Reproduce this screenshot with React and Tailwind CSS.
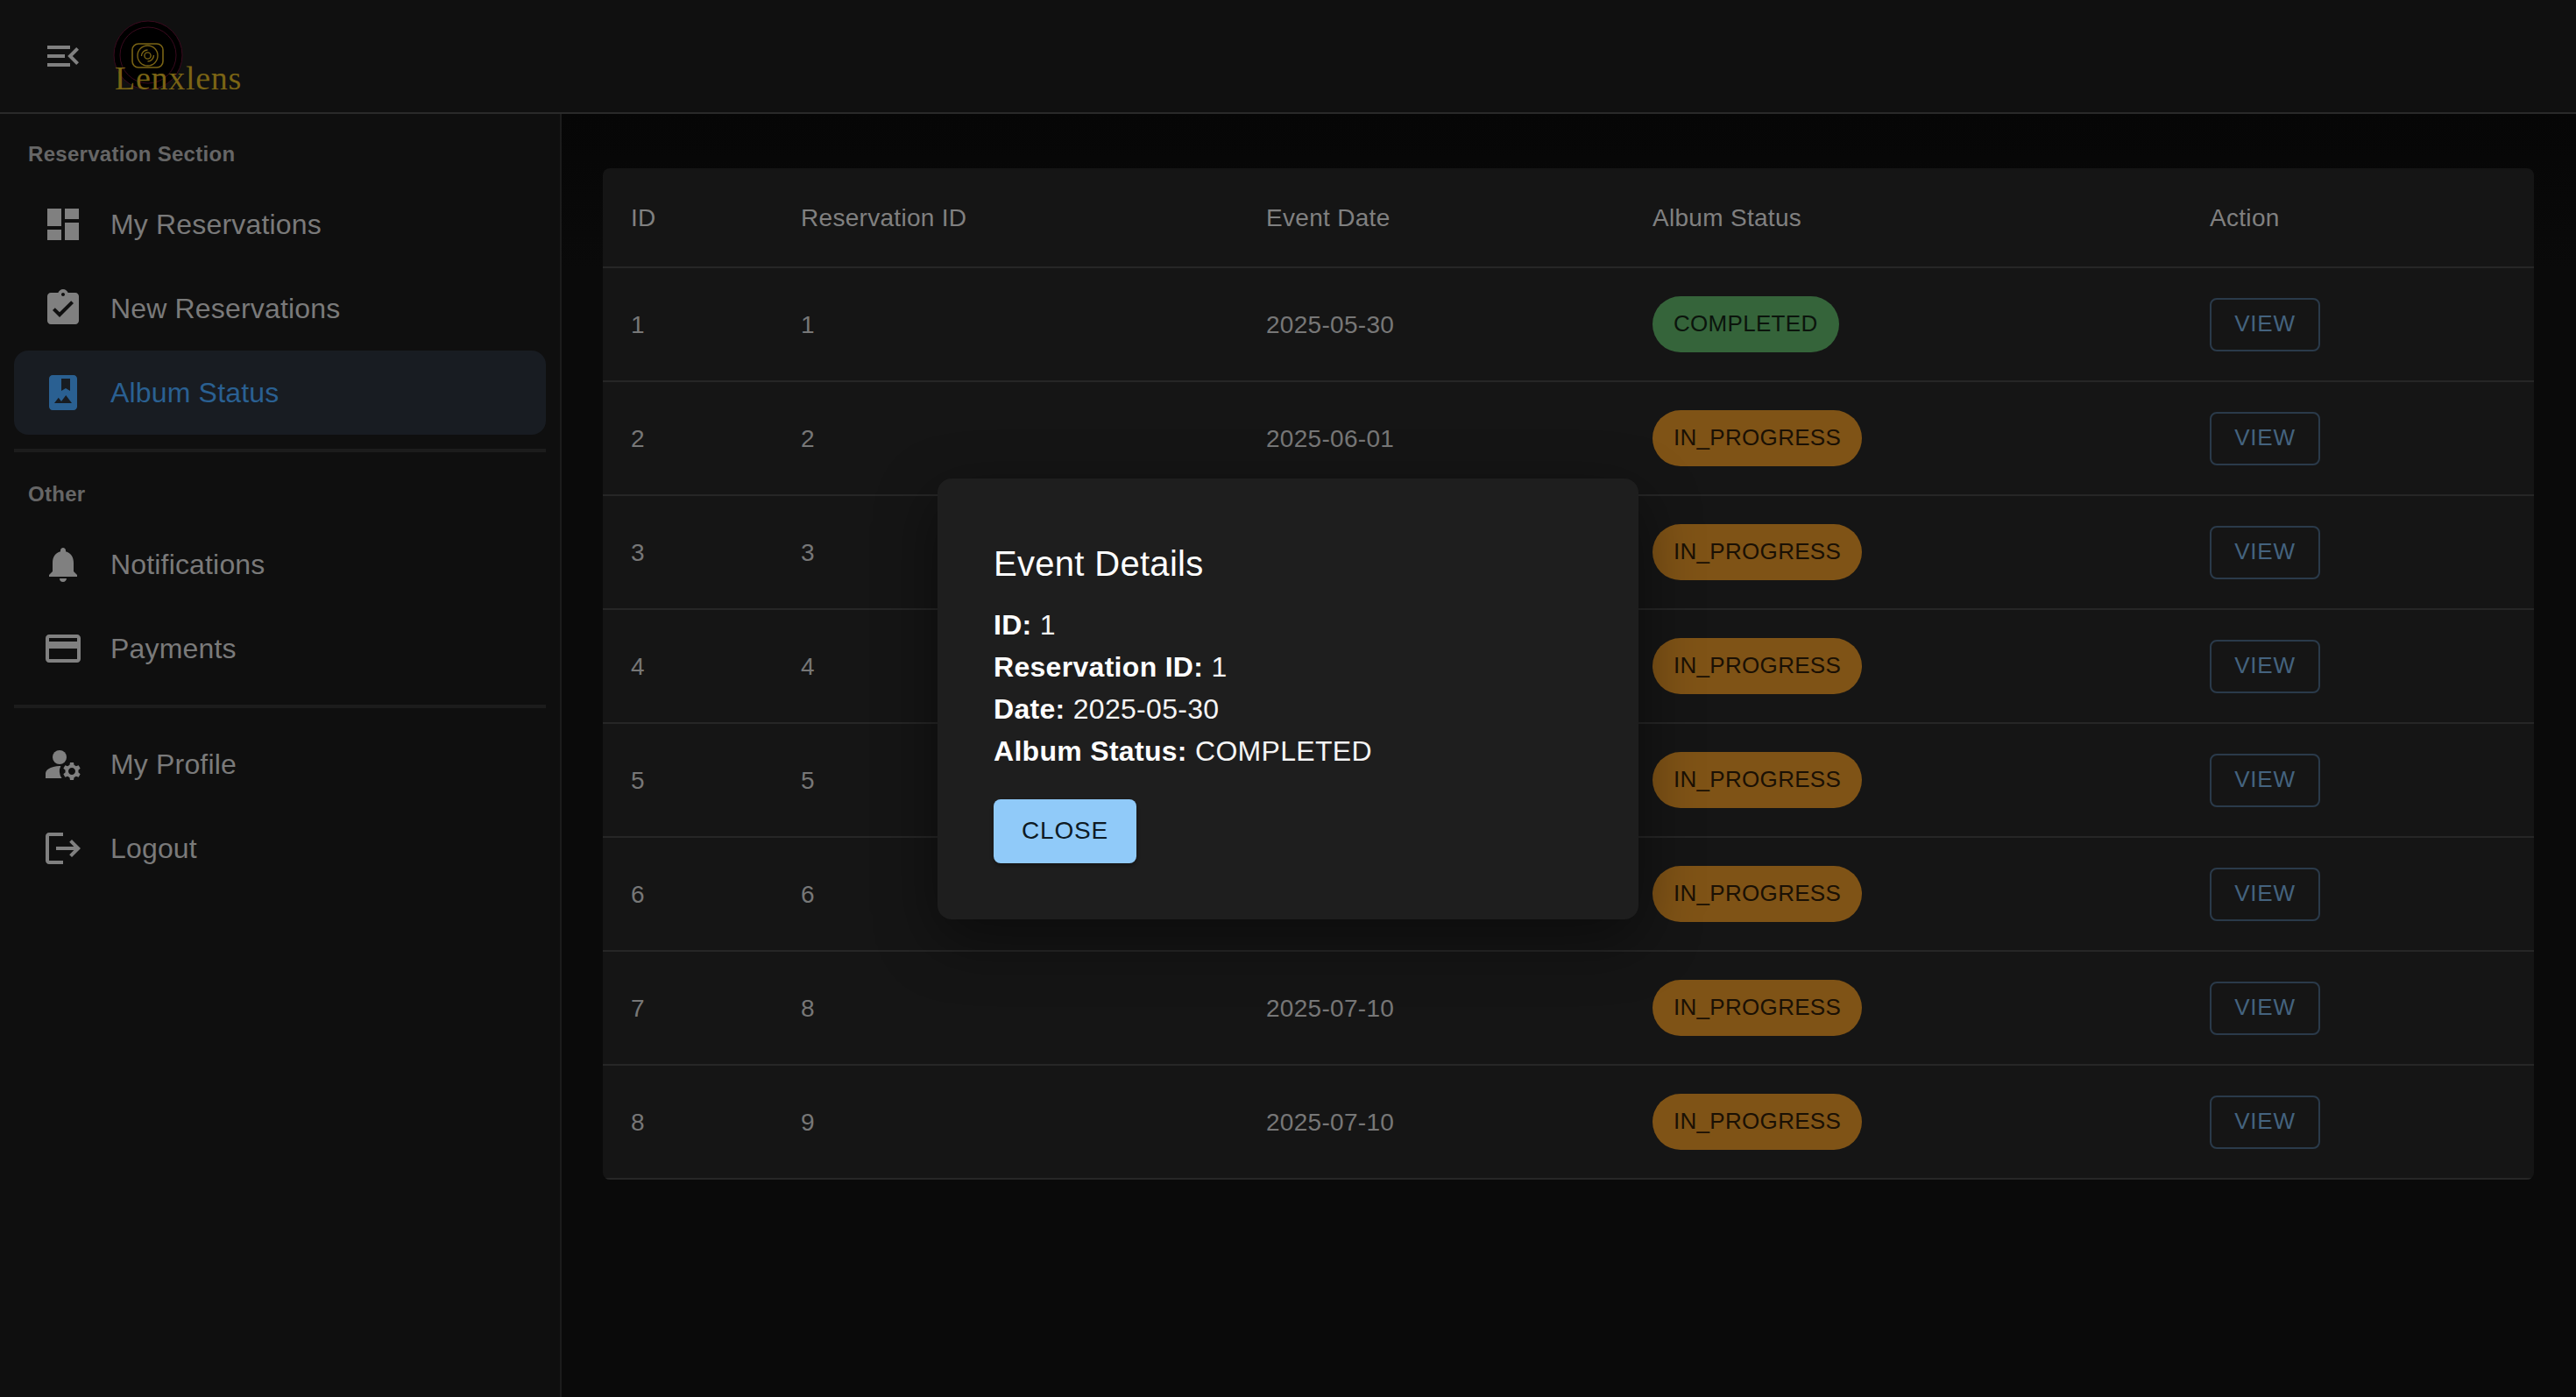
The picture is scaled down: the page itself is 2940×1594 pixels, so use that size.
import React from 'react';
import {
  MdMenuOpen,
  MdDashboard,
  MdAssignmentTurnedIn,
  MdPhotoAlbum,
  MdNotifications,
  MdPayment,
  MdManageAccounts,
  MdLogout,
} from 'react-icons/md';

const reservations = [
  { id: 1, reservationId: 1, date: '2025-05-30', status: 'COMPLETED' },
  { id: 2, reservationId: 2, date: '2025-06-01', status: 'IN_PROGRESS' },
  { id: 3, reservationId: 3, date: '2025-06-10', status: 'IN_PROGRESS' },
  { id: 4, reservationId: 4, date: '2025-06-15', status: 'IN_PROGRESS' },
  { id: 5, reservationId: 5, date: '2025-06-20', status: 'IN_PROGRESS' },
  { id: 6, reservationId: 6, date: '2025-07-01', status: 'IN_PROGRESS' },
  { id: 7, reservationId: 8, date: '2025-07-10', status: 'IN_PROGRESS' },
  { id: 8, reservationId: 9, date: '2025-07-10', status: 'IN_PROGRESS' },
];

function Logo() {
  return (
    <div className="relative w-[160px] h-[100px]">
      <svg width="90" height="90" viewBox="0 0 90 90" className="absolute left-0 top-0" fill="none">
        <circle cx="40" cy="40" r="39" fill="#000" stroke="#3a0a1e" strokeWidth="1" />
        <circle cx="40" cy="40" r="32" stroke="#3a0a1e" strokeWidth="1" />
        <rect x="22" y="27" width="35" height="27" rx="7" stroke="#7a6414" strokeWidth="1.6" />
        <circle cx="39.5" cy="40.5" r="11.5" stroke="#7a6414" strokeWidth="1.4" />
        <path d="M32.5 41a7 7 0 0 1 7-7M46.5 40a7 7 0 0 1-7 7" stroke="#7a6414" strokeWidth="1.4" />
        <circle cx="39.5" cy="40.5" r="3.6" stroke="#7a6414" strokeWidth="1.4" />
      </svg>
      <span className="absolute left-[2px] top-[44px] text-[38px] leading-[44px] tracking-[0.7px] text-[#7a6414] font-['Liberation_Serif',serif]">
        Lenxlens
      </span>
    </div>
  );
}

function NavItem({ icon: Icon, label, active }) {
  return (
    <a
      className={`flex items-center h-[96px] mx-4 pl-8 rounded-2xl ${active ? 'bg-[#181c22] text-[#2a6092]' : 'text-[#7a7a7a]'}`}
    >
      <Icon size={48} className={`shrink-0 ${active ? 'text-[#2a6092]' : 'text-[#808080]'}`} />
      <span className="ml-[30px] text-[32px] leading-[48px] tracking-[0.17px]">{label}</span>
    </a>
  );
}

function SectionLabel({ children, className }) {
  return (
    <div className={`h-10 mb-3 pl-[32px] flex items-center text-[24px] font-bold tracking-[0.3px] text-[#666666] ${className}`}>
      {children}
    </div>
  );
}

function StatusChip({ status }) {
  const done = status === 'COMPLETED';
  return (
    <span
      className={`inline-flex items-center h-16 px-6 pb-[2px] rounded-full text-[26px] ${done ? 'bg-[#35643a] text-[#0b140c]' : 'bg-[#7f5316] text-[#1a1004]'}`}
    >
      {status}
    </span>
  );
}

export default function App() {
  return (
    <div className="relative h-screen flex flex-col overflow-hidden bg-[#0a0a0a] font-['Liberation_Sans',Arial,sans-serif]">
      {/* Top bar */}
      <header className="h-[130px] shrink-0 flex items-center bg-[#101010] border-b-2 border-[#2a2a2a]">
        <MdMenuOpen size={48} className="ml-12 text-[#808080]" />
        <div className="ml-[33px] mt-[18px]">
          <Logo />
        </div>
      </header>

      <div className="flex flex-1 min-h-0">
        {/* Sidebar */}
        <aside className="w-[641px] shrink-0 pt-[26px] bg-[#0f0f0f] border-r-2 border-[#1c1c1c]">
          <SectionLabel>Reservation Section</SectionLabel>
          <NavItem icon={MdDashboard} label="My Reservations" />
          <NavItem icon={MdAssignmentTurnedIn} label="New Reservations" />
          <NavItem icon={MdPhotoAlbum} label="Album Status" active />
          <div className="h-[4px] mx-4 mt-4 bg-[#1c1c1c]" />
          <SectionLabel className="mt-7">Other</SectionLabel>
          <NavItem icon={MdNotifications} label="Notifications" />
          <NavItem icon={MdPayment} label="Payments" />
          <div className="h-[4px] mx-4 my-4 bg-[#1c1c1c]" />
          <NavItem icon={MdManageAccounts} label="My Profile" />
          <NavItem icon={MdLogout} label="Logout" />
        </aside>

        {/* Album table */}
        <main className="flex-1 pt-[62px] pl-[47px] pr-[48px] bg-gradient-to-b from-[#060606] to-[#0a0a0a] to-[12%]">
          <div className="rounded-lg bg-[#151515] overflow-hidden">
            <table className="w-full table-fixed border-separate border-spacing-0 text-left text-[28px] tracking-[0.3px] text-[#777777]">
              <colgroup>
                <col className="w-[194px]" />
                <col className="w-[531px]" />
                <col className="w-[441px]" />
                <col className="w-[636px]" />
                <col />
              </colgroup>
              <thead>
                <tr>
                  {['ID', 'Reservation ID', 'Event Date', 'Album Status', 'Action'].map((title) => (
                    <th key={title} className="h-[114px] pl-[32px] pt-[2px] font-normal text-[#808080] border-b-2 border-[#262626]">
                      {title}
                    </th>
                  ))}
                </tr>
              </thead>
              <tbody>
                {reservations.map((row) => (
                  <tr key={row.id}>
                    <td className="h-[130px] pl-[32px] pt-[2px] border-b-2 border-[#262626]">{row.id}</td>
                    <td className="pl-[32px] pt-[2px] border-b-2 border-[#262626]">{row.reservationId}</td>
                    <td className="pl-[32px] pt-[2px] border-b-2 border-[#262626]">{row.date}</td>
                    <td className="pl-[32px] border-b-2 border-[#262626]">
                      <StatusChip status={row.status} />
                    </td>
                    <td className="pl-[32px] border-b-2 border-[#262626]">
                      <button className="w-[126px] h-[61px] pb-[2px] rounded-lg border-2 border-[#2a3a4a] text-[26px] tracking-[0.74px] text-[#44637f]">
                        VIEW
                      </button>
                    </td>
                  </tr>
                ))}
              </tbody>
            </table>
          </div>
        </main>
      </div>

      {/* Event details modal */}
      <div className="absolute inset-0 flex items-center justify-center">
        <div className="w-[800px] px-16 pt-[73px] pb-16 rounded-2xl bg-[#1e1e1e] shadow-[0_22px_70px_rgba(0,0,0,0.45)] text-white">
          <h2 className="text-[40px] leading-[48px] font-normal tracking-[0.3px]">Event Details</h2>
          <div className="mt-[22px] text-[32px] leading-[48px] tracking-[0.3px] text-[#f5f5f5]">
            <p><strong className="text-white">ID:</strong> 1</p>
            <p><strong className="text-white">Reservation ID:</strong> 1</p>
            <p><strong className="text-white">Date:</strong> 2025-05-30</p>
            <p><strong className="text-white">Album Status:</strong> COMPLETED</p>
          </div>
          <button className="mt-[31px] w-[163px] h-[73px] rounded-lg bg-[#90caf9] text-[28px] tracking-[0.8px] text-[#0e1a24] shadow-[0_3px_4px_rgba(0,0,0,0.3)]">
            CLOSE
          </button>
        </div>
      </div>
    </div>
  );
}
